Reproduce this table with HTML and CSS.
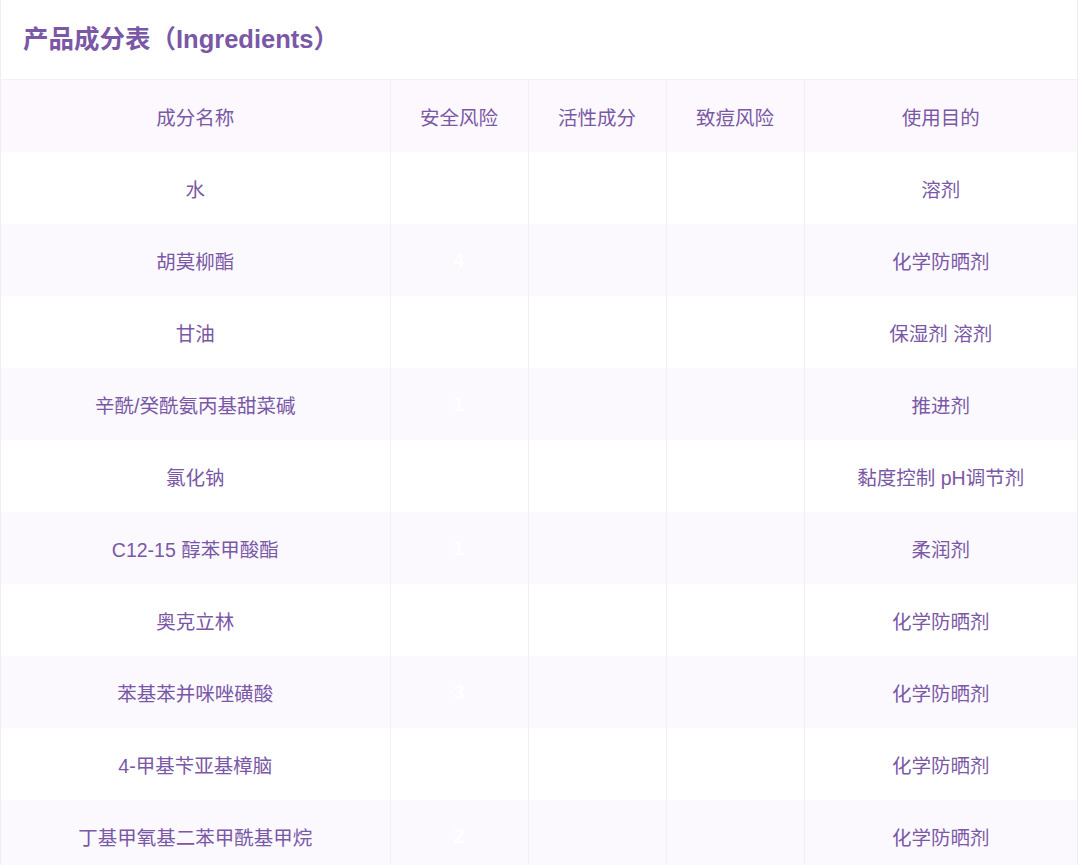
FILE: index.html
```html
<!DOCTYPE html>
<html lang="zh">
<head>
<meta charset="utf-8">
<title>产品成分表</title>
<link rel="stylesheet" href="styles.css">
</head>
<body>
<section class="card">
  <h2 class="title">产品成分表（Ingredients）</h2>
  <table class="tbl">
    <colgroup>
      <col class="c-name"><col class="c-mid"><col class="c-mid"><col class="c-mid"><col class="c-use">
    </colgroup>
    <thead>
      <tr><th>成分名称</th><th>安全风险</th><th>活性成分</th><th>致痘风险</th><th>使用目的</th></tr>
    </thead>
    <tbody>
      <tr><td>水</td><td class="risk">1</td><td></td><td></td><td>溶剂</td></tr>
      <tr><td>胡莫柳酯</td><td class="risk">4</td><td></td><td></td><td>化学防晒剂</td></tr>
      <tr><td>甘油</td><td class="risk">1</td><td></td><td></td><td>保湿剂 溶剂</td></tr>
      <tr><td>辛酰/癸酰氨丙基甜菜碱</td><td class="risk">1</td><td></td><td></td><td>推进剂</td></tr>
      <tr><td>氯化钠</td><td class="risk">1</td><td></td><td></td><td>黏度控制 pH调节剂</td></tr>
      <tr><td>C12-15 醇苯甲酸酯</td><td class="risk">1</td><td></td><td></td><td>柔润剂</td></tr>
      <tr><td>奥克立林</td><td class="risk">3</td><td></td><td></td><td>化学防晒剂</td></tr>
      <tr><td>苯基苯并咪唑磺酸</td><td class="risk">3</td><td></td><td></td><td>化学防晒剂</td></tr>
      <tr><td>4-甲基苄亚基樟脑</td><td class="risk">4</td><td></td><td></td><td>化学防晒剂</td></tr>
      <tr><td>丁基甲氧基二苯甲酰基甲烷</td><td class="risk">2</td><td></td><td></td><td>化学防晒剂</td></tr>
    </tbody>
  </table>
</section>
</body>
</html>
```

FILE: styles.css
```css
html, body {
  margin: 0;
  padding: 0;
  background: #ffffff;
}
body {
  font-family: "Liberation Sans", "Noto Sans CJK SC", sans-serif;
  color: #7a58a6;
  overflow: hidden;
}
.card {
  width: 1076px;
  border-left: 1px solid #f0eef2;
  border-right: 1px solid #f0eef2;
  background: #fff;
}
.title {
  margin: 0;
  height: 80px;
  padding-left: 22px;
  display: flex;
  align-items: center;
  box-sizing: border-box;
  padding-bottom: 6px;
  font-size: 25.5px;
  font-weight: 700;
  color: #7a58a6;
  border-bottom: 1px solid #f3f1f5;
}
.tbl {
  width: 100%;
  border-collapse: collapse;
  table-layout: fixed;
}
.c-name { width: 389px; }
.c-mid { width: 138px; }
.c-use { width: auto; }
.tbl th, .tbl td {
  height: 72px;
  padding: 0;
  text-align: center;
  vertical-align: middle;
  font-size: 19.5px;
  font-weight: 400;
  color: #7a58a6;
  border-left: 1px solid #f2f0f4;
  box-sizing: border-box;
}
.tbl th:first-child, .tbl td:first-child {
  border-left: none;
}
.tbl thead tr {
  background: #fcf8fd;
}
.tbl tbody tr:nth-child(even) {
  background: #fbf9fe;
}
.tbl td.risk {
  color: #ffffff;
  font-weight: 700;
}
```
